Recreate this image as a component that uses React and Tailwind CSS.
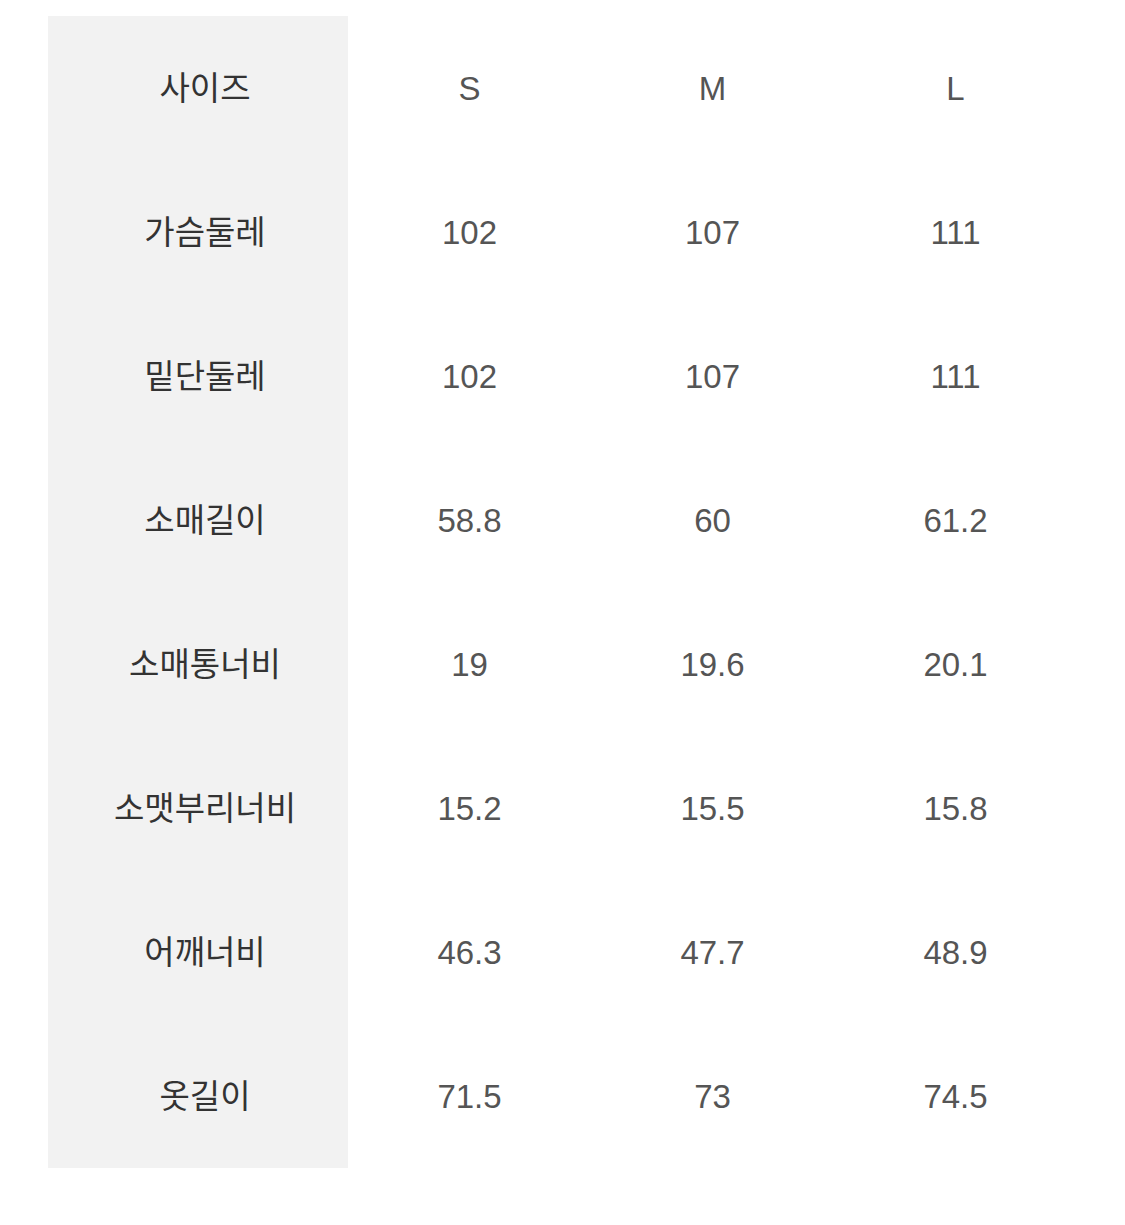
export default function App() {
  const rows = [
    ["사이즈", "S", "M", "L"],
    ["가슴둘레", "102", "107", "111"],
    ["밑단둘레", "102", "107", "111"],
    ["소매길이", "58.8", "60", "61.2"],
    ["소매통너비", "19", "19.6", "20.1"],
    ["소맷부리너비", "15.2", "15.5", "15.8"],
    ["어깨너비", "46.3", "47.7", "48.9"],
    ["옷길이", "71.5", "73", "74.5"],
  ];
  return (
    <div className="w-[1125px] h-[1225px] bg-white pt-4 px-12" style={{ fontFamily: '"Liberation Sans", "Noto Sans CJK KR", sans-serif' }}>
      <div className="grid grid-cols-[300px_1fr_1fr_1fr]">
        {rows.map((r, i) => (
          <div key={i} className="contents">
            <div className="h-[144px] bg-[#f2f2f2] flex items-center justify-center pl-[14px] pt-[2px] text-[33px] text-[#333333]">{r[0]}</div>
            {r.slice(1).map((v, j) => (
              <div key={j} className="h-[144px] flex items-center justify-center pt-[2px] text-[33px] text-[#555555]">{v}</div>
            ))}
          </div>
        ))}
      </div>
    </div>
  );
}
